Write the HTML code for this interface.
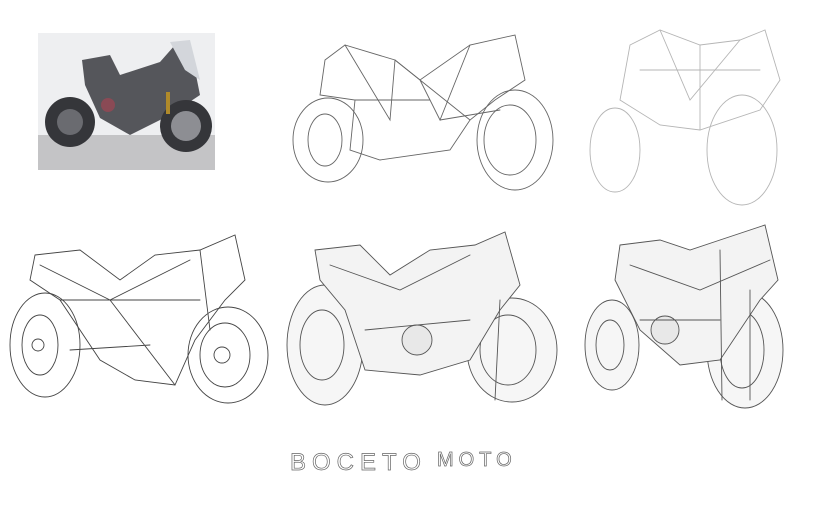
<!DOCTYPE html>
<html><head><meta charset="utf-8"><style>
html,body{margin:0;padding:0;background:#fff;width:820px;height:532px;overflow:hidden}
svg{display:block}
</style></head><body>
<svg width="820" height="532" viewBox="0 0 820 532" xmlns="http://www.w3.org/2000/svg">
<rect width="820" height="532" fill="#fff"/>
<g>
<rect x="38" y="33" width="177" height="137" fill="#eeeff1"/>
<rect x="38" y="135" width="177" height="35" fill="#c4c4c6"/>
<path d="M82 60 L110 55 L120 75 L160 62 L175 45 L195 70 L200 95 L185 105 L160 120 L130 135 L100 118 L85 85 Z" fill="#55565b"/>
<path d="M170 42 L190 40 L200 80 L185 70 Z" fill="#d3d6db"/>
<circle cx="70" cy="122" r="25" fill="#35363a"/><circle cx="70" cy="122" r="13" fill="#6a6b70"/>
<circle cx="186" cy="126" r="26" fill="#35363a"/><circle cx="186" cy="126" r="15" fill="#8d8e93"/>
<circle cx="108" cy="105" r="7" fill="#8a4a55"/>
<rect x="166" y="92" width="4" height="22" fill="#b08a2a"/>
</g>
<g fill="none" stroke="#666" stroke-width="0.9" stroke-linecap="round">
<ellipse cx="328" cy="140" rx="35" ry="42"/><ellipse cx="325" cy="140" rx="17" ry="26"/>
<ellipse cx="515" cy="140" rx="38" ry="50"/><ellipse cx="510" cy="140" rx="26" ry="35"/>
<path d="M325 60 L345 45 L395 60 L420 80 L470 45 L515 35 L525 80 L495 100 L470 120 L450 150 L380 160 L350 150 L355 100 L320 95 Z"/>
<path d="M345 45 L390 120 L395 60 M420 80 L440 120 L470 45 M395 60 L470 120 M355 100 L430 100 M440 120 L500 110"/>
<g stroke="#b5b5b5">
<ellipse cx="615" cy="150" rx="25" ry="42"/><ellipse cx="742" cy="150" rx="35" ry="55"/>
<path d="M630 45 L660 30 L700 45 L740 40 L765 30 L780 80 L760 110 L700 130 L660 125 L620 100 Z"/>
<path d="M660 30 L690 100 L740 40 M640 70 L760 70 M700 45 L700 130"/>
</g>
<g stroke="#444">
<ellipse cx="45" cy="345" rx="35" ry="52"/><ellipse cx="40" cy="345" rx="18" ry="30"/><circle cx="38" cy="345" r="6"/>
<ellipse cx="228" cy="355" rx="40" ry="48"/><ellipse cx="225" cy="355" rx="25" ry="32"/><circle cx="222" cy="355" r="8"/>
<path d="M35 255 L80 250 L120 280 L155 255 L200 250 L235 235 L245 280 L225 300 L195 340 L175 385 L135 380 L100 360 L60 300 L30 280 Z"/>
<path d="M40 265 L110 300 L190 260 M70 350 L150 345 M110 300 L175 385 M200 250 L210 330 M60 300 L200 300"/>
</g>
<g stroke="#555">
<ellipse cx="325" cy="345" rx="38" ry="60" fill="#f6f6f6"/><ellipse cx="322" cy="345" rx="22" ry="35"/>
<ellipse cx="512" cy="350" rx="45" ry="52" fill="#f6f6f6"/><ellipse cx="508" cy="350" rx="28" ry="35"/>
<path d="M315 250 L360 245 L390 275 L430 250 L475 245 L505 232 L520 285 L500 310 L470 360 L420 375 L365 370 L345 310 L320 280 Z" fill="#f3f3f3"/>
<circle cx="417" cy="340" r="15" fill="#e8e8e8"/>
<path d="M330 265 L400 290 L470 255 M365 330 L470 320 M500 300 L495 400"/>
</g>
<g stroke="#555">
<ellipse cx="612" cy="345" rx="27" ry="45" fill="#f6f6f6"/><ellipse cx="610" cy="345" rx="14" ry="25"/>
<ellipse cx="745" cy="350" rx="38" ry="58" fill="#f6f6f6"/><ellipse cx="742" cy="350" rx="22" ry="38"/>
<path d="M620 245 L660 240 L690 250 L720 240 L765 225 L778 280 L760 300 L720 360 L680 365 L640 330 L615 280 Z" fill="#f3f3f3"/>
<circle cx="665" cy="330" r="14" fill="#e8e8e8"/>
<path d="M630 265 L700 290 L770 260 M640 320 L720 320 M720 250 L722 400 M750 290 L750 400"/>
</g>
</g>
<text x="290" y="470" font-family="Liberation Sans, sans-serif" font-size="24" letter-spacing="6" fill="none" stroke="#666" stroke-width="0.7">BOCETO</text>
<text x="437" y="466" font-family="Liberation Sans, sans-serif" font-size="20" letter-spacing="5" fill="none" stroke="#666" stroke-width="0.7">MOTO</text>
</svg>
</body></html>
